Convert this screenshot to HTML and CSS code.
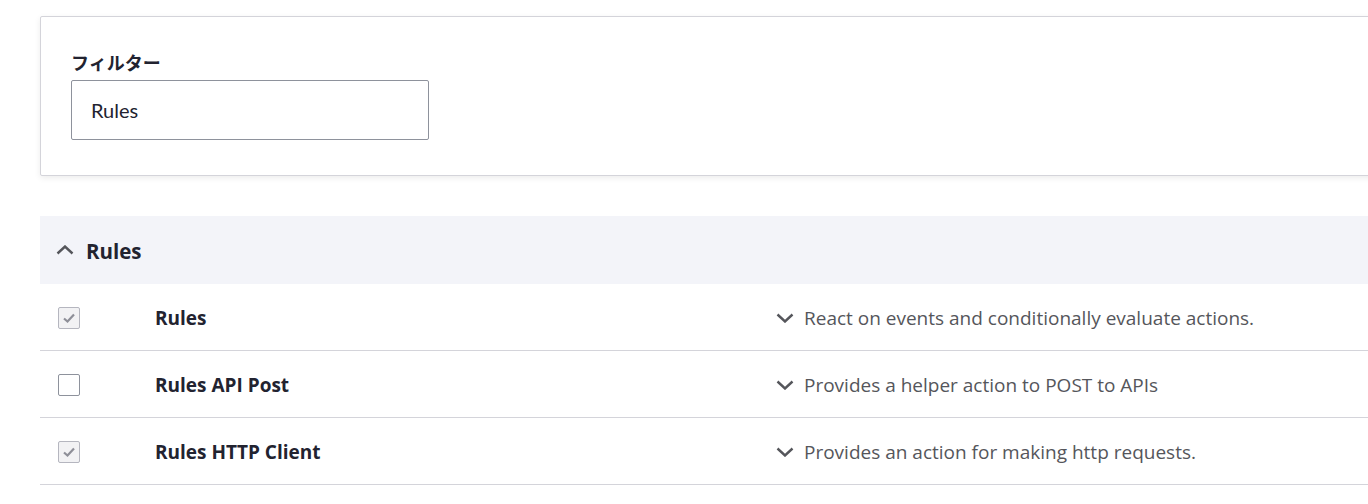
FILE: index.html
```html
<!DOCTYPE html>
<html lang="ja">
<head>
<meta charset="utf-8">
<title>Extend</title>
<link rel="stylesheet" href="styles.css">
</head>
<body>
<div class="page">
  <section class="filter-card">
    <label class="filter-label" for="filter">フィルター</label>
    <div class="filter-input" id="filter">Rules</div>
  </section>

  <section class="package">
    <div class="package-head">
      <svg class="chev" width="18" height="10" viewBox="0 0 18 10"><path d="M1.5 8.5 L9 1.5 L16.5 8.5" fill="none" stroke="#55565b" stroke-width="2.4"/></svg>
      <h3 class="package-title">Rules</h3>
    </div>
    <div class="row">
      <div class="cell-check"><span class="cb cb-on"><svg width="14" height="12" viewBox="0 0 14 12"><path d="M2 6.5 L5.5 9.5 L12 2.5" fill="none" stroke="#8e8f98" stroke-width="2.2"/></svg></span></div>
      <div class="name">Rules</div>
      <div class="desc"><svg class="chev-d" width="18" height="10" viewBox="0 0 18 10"><path d="M1.5 1.5 L9 8.5 L16.5 1.5" fill="none" stroke="#55565b" stroke-width="2.4"/></svg><span>React on events and conditionally evaluate actions.</span></div>
    </div>
    <div class="row">
      <div class="cell-check"><span class="cb"></span></div>
      <div class="name">Rules API Post</div>
      <div class="desc"><svg class="chev-d" width="18" height="10" viewBox="0 0 18 10"><path d="M1.5 1.5 L9 8.5 L16.5 1.5" fill="none" stroke="#55565b" stroke-width="2.4"/></svg><span>Provides a helper action to POST to APIs</span></div>
    </div>
    <div class="row">
      <div class="cell-check"><span class="cb cb-on"><svg width="14" height="12" viewBox="0 0 14 12"><path d="M2 6.5 L5.5 9.5 L12 2.5" fill="none" stroke="#8e8f98" stroke-width="2.2"/></svg></span></div>
      <div class="name">Rules HTTP Client</div>
      <div class="desc"><svg class="chev-d" width="18" height="10" viewBox="0 0 18 10"><path d="M1.5 1.5 L9 8.5 L16.5 1.5" fill="none" stroke="#55565b" stroke-width="2.4"/></svg><span>Provides an action for making http requests.</span></div>
    </div>
  </section>
</div>
</body>
</html>
```
FILE: styles.css
```css
html, body {
  margin: 0;
  padding: 0;
  background: #fff;
  overflow: hidden;
}
body {
  font-family: "Open Sans", "Noto Sans CJK JP", sans-serif;
  color: #222330;
}
.page {
  padding: 16px 0 0 40px;
  overflow: hidden;
}
.filter-card {
  margin-right: -20px;
  border: 1px solid #d4d4da;
  border-radius: 2px;
  background: #fff;
  box-shadow: 0 2px 6px rgba(0, 0, 0, 0.08);
  padding: 33px 30px 35px;
  display: flex;
  flex-direction: column;
  align-items: flex-start;
}
.filter-label {
  font-family: "Noto Sans CJK JP", sans-serif;
  font-weight: 700;
  font-size: 18px;
  line-height: 24px;
  margin-bottom: 6px;
}
.filter-input {
  box-sizing: border-box;
  width: 358px;
  height: 60px;
  border: 1px solid #8e929c;
  border-radius: 2px;
  padding: 0 19px;
  display: flex;
  align-items: center;
  font-family: Lato, sans-serif;
  font-size: 20px;
  color: #222330;
}
.package {
  margin-top: 40px;
}
.package-head {
  height: 68px;
  background: #f3f4f9;
  display: flex;
  align-items: center;
  padding-left: 16px;
  gap: 12px;
}
.chev { display: block; margin-top: -1px; }
.package-title {
  margin: 0;
  font-size: 20.5px;
  font-weight: 700;
  color: #222330;
  padding-top: 2px;
}
.row {
  display: grid;
  grid-template-columns: 115px 621px 1fr;
  align-items: center;
  height: 66px;
  border-bottom: 1px solid #d4d4da;
}
.cell-check {
  padding-left: 18px;
  padding-top: 2px;
  display: flex;
}
.cb {
  box-sizing: border-box;
  width: 22px;
  height: 22px;
  border: 1px solid #8e929c;
  border-radius: 2px;
  background: #fff;
  display: flex;
  align-items: center;
  justify-content: center;
}
.cb-on {
  background: #f2f2f4;
  border-color: #b5b6bf;
}
.name {
  font-size: 19px;
  font-weight: 700;
  color: #222330;
  padding-top: 1px;
}
.desc {
  display: flex;
  align-items: center;
  gap: 10px;
  font-size: 19px;
  color: #55565b;
  padding-top: 1px;
}
.chev-d { display: block; }
```
